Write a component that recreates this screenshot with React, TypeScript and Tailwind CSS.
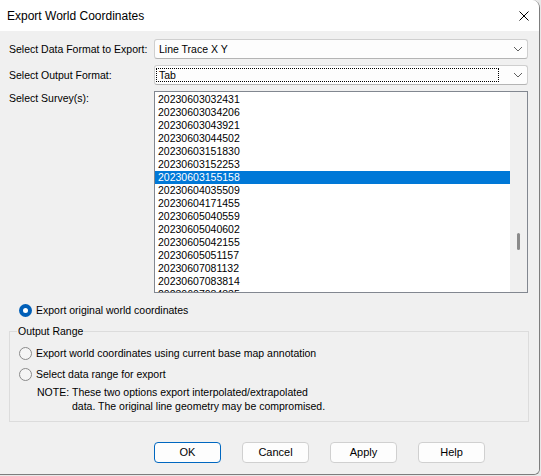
import React from 'react';

const surveys = [
  '20230603032431',
  '20230603034206',
  '20230603043921',
  '20230603044502',
  '20230603151830',
  '20230603152253',
  '20230603155158',
  '20230604035509',
  '20230604171455',
  '20230605040559',
  '20230605040602',
  '20230605042155',
  '20230605051157',
  '20230607081132',
  '20230607083814',
  '20230607084835',
];

function Chevron() {
  return (
    <svg width="10" height="6" viewBox="0 0 10 6" className="shrink-0">
      <path d="M1 1 L5 5 L9 1" fill="none" stroke="#606060" strokeWidth="1" />
    </svg>
  );
}

function Combo({ value, focused }: { value: string; focused?: boolean }) {
  return (
    <div className="w-[374px] h-[20px] flex items-center bg-[#fdfdfd] border border-[#cfcfcf] border-b-[#b4b4b4] rounded-[3px] pr-[4px]">
      <div
        className={
          focused
            ? 'flex-1 h-[14px] ml-[1px] mr-[14px] flex items-center pl-[2px] border border-dotted border-black'
            : 'flex-1 h-[14px] ml-[1px] mr-[14px] flex items-center pl-[3px]'
        }
      >
        {value}
      </div>
      <Chevron />
    </div>
  );
}

function Radio({ checked, label }: { checked?: boolean; label: string }) {
  return (
    <div className="flex items-center h-[13px]">
      {checked ? (
        <div className="w-[13px] h-[13px] rounded-full bg-[#005fb8] flex items-center justify-center shrink-0">
          <div className="w-[5px] h-[5px] rounded-full bg-white" />
        </div>
      ) : (
        <div className="w-[13px] h-[13px] rounded-full bg-[#f5f5f5] border border-[#8a8a8a] shrink-0" />
      )}
      <span className="ml-[4px]">{label}</span>
    </div>
  );
}

function DialogButton({ label, primary }: { label: string; primary?: boolean }) {
  return (
    <button
      className={
        primary
          ? 'w-[67px] h-[21px] rounded-[4px] bg-[#fdfdfd] border border-[#0067c0] text-[11px]'
          : 'w-[67px] h-[21px] rounded-[4px] bg-[#fdfdfd] border border-[#d0d0d0] text-[11px]'
      }
    >
      {label}
    </button>
  );
}

export default function App() {
  return (
    <div className="w-[541px] h-[476px] bg-[#e8e8e8] font-['Liberation_Sans',Arial,sans-serif] text-black">
      <div className="w-[540px] h-[475px] flex flex-col border-r border-b border-[#7d7d7d] rounded-tr-[8px] rounded-br-[6px] overflow-hidden">
        {/* Title bar */}
        <div className="h-[31px] bg-white flex items-center pl-[7px] pr-[10px] shrink-0">
          <span className="text-[12px] flex-1">Export World Coordinates</span>
          <svg width="10" height="10" viewBox="0 0 10 10">
            <path d="M0.5 0.5 L9.5 9.5 M9.5 0.5 L0.5 9.5" stroke="#000" strokeWidth="1" />
          </svg>
        </div>

        {/* Body */}
        <div className="flex-1 bg-[#f0f0f0] flex flex-col pl-[9px] text-[10.5px] leading-[13px]">
          <div className="flex items-center mt-[8px]">
            <div className="w-[145px]">Select Data Format to Export:</div>
            <Combo value="Line Trace X Y" />
          </div>
          <div className="flex items-center mt-[6px]">
            <div className="w-[145px]">Select Output Format:</div>
            <Combo value="Tab" focused />
          </div>
          <div className="flex mt-[6px]">
            <div className="w-[145px] pt-[1px]">Select Survey(s):</div>
            <div className="w-[374px] h-[202px] bg-white border border-[#828790] flex overflow-hidden">
              <div className="flex-1 pt-[1px] overflow-hidden">
                {surveys.map((s) => (
                  <div
                    key={s}
                    className={
                      s === '20230603155158'
                        ? 'h-[13px] pl-[3px] bg-[#0078d7] text-white leading-[13px]'
                        : 'h-[13px] pl-[3px] leading-[13px]'
                    }
                  >
                    {s}
                  </div>
                ))}
              </div>
              <div className="w-[17px] bg-[#f0f0f0] flex justify-center shrink-0">
                <div className="w-[3px] h-[17px] mt-[141px] rounded-full bg-[#8a8a8a]" />
              </div>
            </div>
          </div>

          <div className="mt-[11px] ml-[10px]">
            <Radio checked label="Export original world coordinates" />
          </div>

          <fieldset className="mt-[8px] w-[520px] border border-[#dcdcdc] pl-[9px] pb-[8px]">
            <legend className="ml-[-2px] px-[1px] leading-[13px]">Output Range</legend>
            <div className="mt-[9px]">
              <Radio label="Export world coordinates using current base map annotation" />
            </div>
            <div className="mt-[8px]">
              <Radio label="Select data range for export" />
            </div>
            <div className="flex mt-[4px] ml-[18px] leading-[14px]">
              <span className="w-[35px] shrink-0">NOTE:</span>
              <div>
                <div>These two options export interpolated/extrapolated</div>
                <div>data. The original line geometry may be compromised.</div>
              </div>
            </div>
          </fieldset>

          <div className="flex gap-[21px] mt-[20px] ml-[145px]">
            <DialogButton label="OK" primary />
            <DialogButton label="Cancel" />
            <DialogButton label="Apply" />
            <DialogButton label="Help" />
          </div>
        </div>
      </div>
    </div>
  );
}
